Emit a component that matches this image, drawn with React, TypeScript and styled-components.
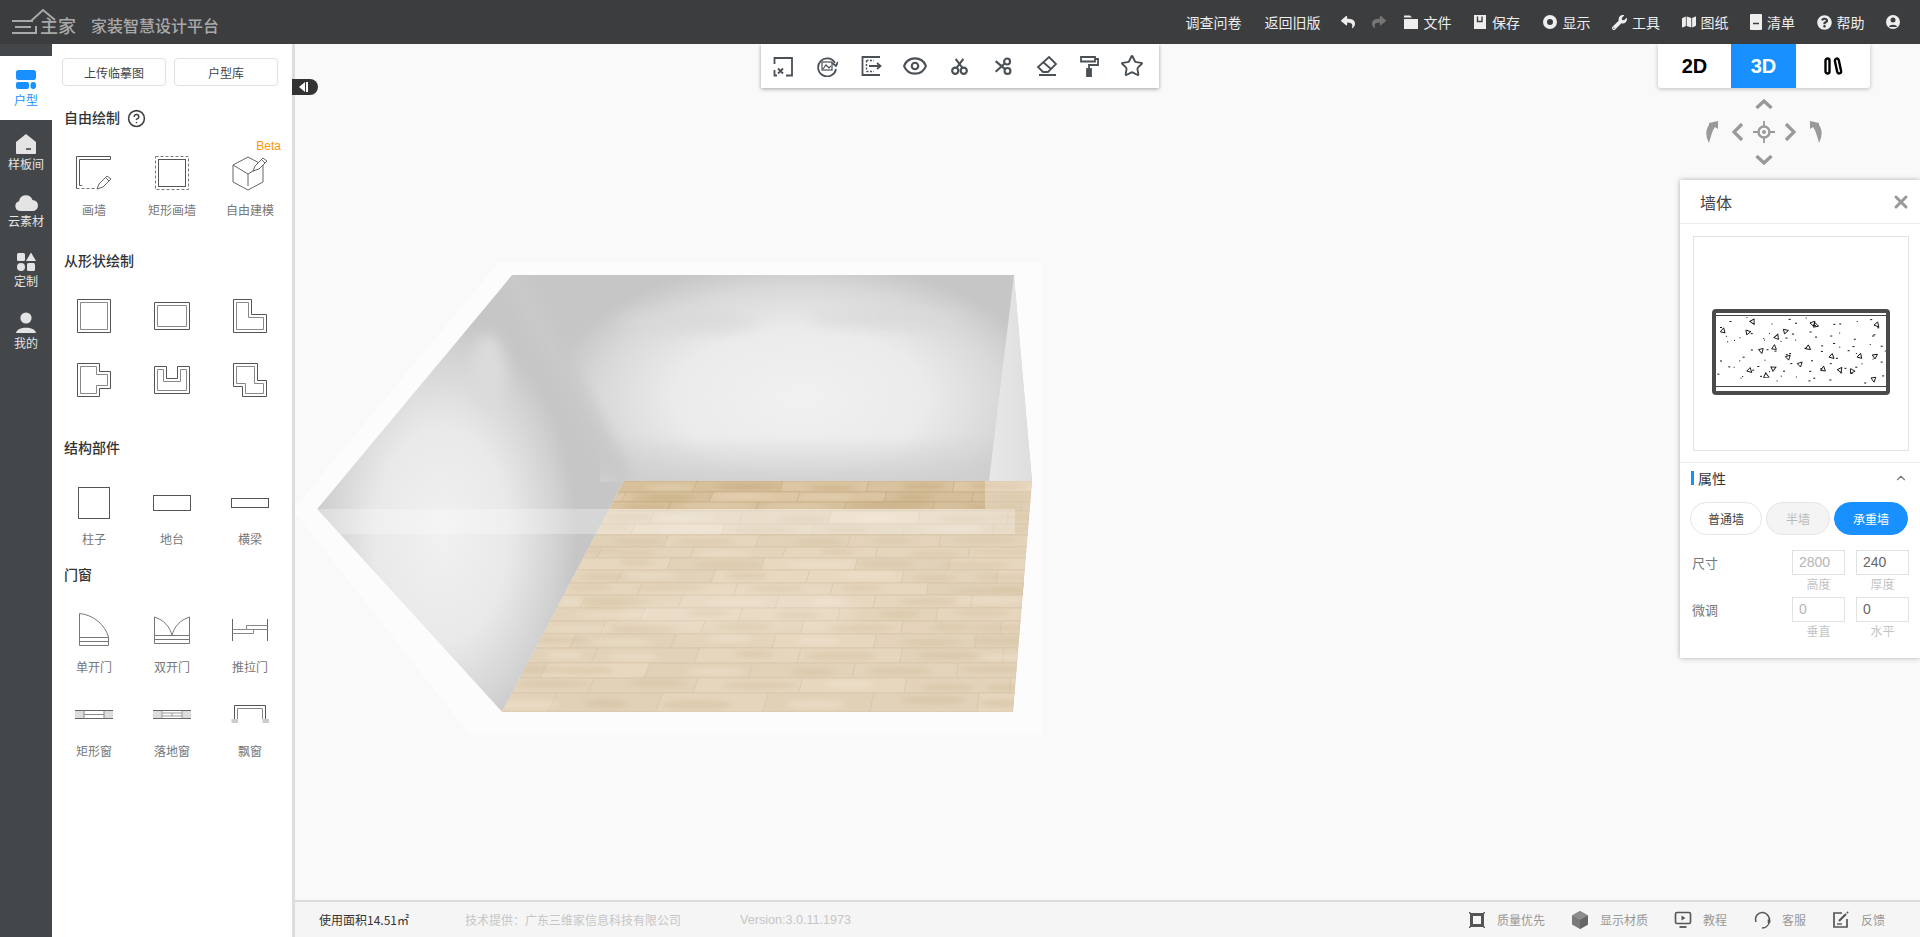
import React from 'react';
import styled, { createGlobalStyle } from 'styled-components';
import { FaReply, FaShare, FaWrench, FaMap, FaQuestionCircle } from 'react-icons/fa';
import { CircleHelp, Eye, Star, ChevronUp, X } from 'lucide-react';

const Global = createGlobalStyle`
  html, body { margin: 0; height: 100%; overflow: hidden; background: #f9f9f9; }
  body { font-family: "Noto Sans CJK SC", "Liberation Sans", sans-serif; font-size: 12px; }
  * { box-sizing: border-box; }
`;

const Page = styled.div`display:flex;flex-direction:column;width:1920px;height:937px;overflow:hidden;`;
const Header = styled.header`height:44px;flex:none;background:#3c3d3f;display:flex;align-items:center;justify-content:space-between;padding:0 20px 0 12px;color:#eee;position:relative;z-index:3;`;
const Brand = styled.div`display:flex;align-items:center;gap:13px;`;
const BrandText = styled.span`font-size:16px;font-weight:500;color:#a9a9a9;margin-top:5px;`;
const HeaderNav = styled.nav`display:flex;align-items:center;gap:21.5px;font-size:14px;`;
const TextLink = styled.span<{ $mr?: number }>`margin-right:${p => p.$mr ?? 0}px;`;
const NavItem = styled.span<{ $dim?: boolean; $mr?: number }>`display:inline-flex;align-items:center;gap:5px;margin-right:${p => p.$mr ?? 0}px;color:${p => (p.$dim ? '#757575' : '#eee')};svg{flex:none;display:block;}`;

const Body = styled.div`flex:1;display:flex;min-height:0;`;
const Rail = styled.aside`width:52px;flex:none;background:#43474a;padding-top:12px;`;
const RailItem = styled.div<{ $active?: boolean; $h: number; $top: number }>`
  height:${p => p.$h}px;padding-top:${p => p.$top}px;display:flex;flex-direction:column;align-items:center;
  background:${p => (p.$active ? '#fff' : 'transparent')};color:${p => (p.$active ? '#1890ff' : '#e4e4e4')};
  svg{display:block;flex:none;}
`;
const RailLabel = styled.span`font-size:12px;line-height:16px;margin-top:1px;`;

const Panel = styled.section`width:243px;flex:none;background:#fff;border-right:3px solid #ddd;padding:14px 0 0 3px;`;
const UploadRow = styled.div`display:flex;gap:8px;padding-left:7px;`;
const OutlineBtn = styled.div`width:104px;height:28px;border:1px solid #e0e0e0;border-radius:4px;font-size:12px;color:#444;display:flex;align-items:center;justify-content:center;`;
const Heading = styled.h3<{ $top: number }>`margin:${p => p.$top}px 0 0 9px;height:20px;padding-bottom:2px;line-height:18px;font-size:14px;font-weight:500;color:#333;display:flex;align-items:center;gap:7px;svg{margin-top:2px;}`;
const ToolGrid = styled.div<{ $top: number; $gap: number }>`margin-top:${p => p.$top}px;display:grid;grid-template-columns:repeat(3,78px);row-gap:${p => p.$gap}px;`;
const Tool = styled.div`position:relative;display:flex;flex-direction:column;align-items:center;svg{display:block;}`;
const ToolLabel = styled.span<{ $gap: number }>`margin-top:${p => p.$gap}px;font-size:12px;line-height:16px;color:#777;`;
const Beta = styled.span`position:absolute;top:-14px;right:8px;font-size:12px;line-height:16px;color:#ff9800;font-family:"Liberation Sans",sans-serif;`;

const Main = styled.main`flex:1;display:flex;flex-direction:column;min-width:0;`;
const Canvas = styled.div`flex:1;position:relative;background:#f9f9f9;`;
const RoomSvg = styled.svg`position:absolute;left:0;top:0;display:block;`;
const Collapse = styled.div`position:absolute;left:-3px;top:35px;width:26px;height:16px;background:#333;border-radius:0 8px 8px 0;display:flex;align-items:center;padding-left:7px;gap:1px;`;
const CollapseTri = styled.i`width:0;height:0;border-style:solid;border-width:5px 6px 5px 0;border-color:transparent #fff transparent transparent;`;
const CollapseBar = styled.i`width:2px;height:10px;background:#fff;`;
const Toolbar = styled.div`position:absolute;left:466px;top:0;height:44px;width:398px;background:#fff;box-shadow:0 1px 4px rgba(0,0,0,.35);display:flex;`;
const ToolBtn = styled.div`width:44px;height:44px;flex:none;display:flex;align-items:center;justify-content:center;color:#4a5056;&:nth-child(8){margin-left:-2px;}&:nth-child(9){margin-left:-1px;}`;
const ViewSwitch = styled.div`position:absolute;right:50px;top:0;height:44px;display:flex;background:#fff;border-radius:0 0 3px 3px;box-shadow:0 1px 4px rgba(0,0,0,.25);overflow:hidden;`;
const ViewBtn = styled.div<{ $w: number; $on?: boolean }>`width:${p => p.$w}px;display:flex;align-items:center;justify-content:center;font:700 20px "Liberation Sans",sans-serif;color:${p => (p.$on ? '#fff' : '#000')};background:${p => (p.$on ? '#1890ff' : 'transparent')};`;
const Orbit = styled.div`position:absolute;right:91px;top:51px;width:130px;display:grid;grid-template-columns:repeat(5,1fr);grid-template-rows:18px 38px 18px;place-items:center;color:#999;svg{display:block;}`;
const OrbitUp = styled.div`grid-column:3;grid-row:1;`;
const OrbitDown = styled.div`grid-column:3;grid-row:3;`;
const OrbitCell = styled.div<{ $c: number }>`grid-column:${p => p.$c};grid-row:2;`;

const Props = styled.aside`position:absolute;right:0;top:136px;width:240px;height:478px;background:#fff;box-shadow:0 0 5px rgba(0,0,0,.3);`;
const PropsHead = styled.div`height:44px;border-bottom:1px solid #ececec;display:flex;align-items:center;justify-content:space-between;padding:0 9px 0 20px;font-size:16px;color:#444;`;
const CloseX = styled.span`color:#999;display:flex;`;
const Preview = styled.div`margin:12px 11px 0 13px;height:215px;border:1px solid #e2e2e2;display:flex;align-items:center;justify-content:center;padding-top:17px;`;
const Divider = styled.div`margin-top:11px;height:1px;background:#ececec;`;
const SectionHead = styled.div`display:flex;align-items:center;justify-content:space-between;padding:0 12px 0 11px;margin-top:6px;height:18px;color:#777;`;
const SectionTitle = styled.span`border-left:3px solid #1890ff;padding-left:4px;line-height:14px;font-size:14px;color:#333;`;
const WallTypes = styled.div`display:flex;gap:4px;margin:15px 0 0 10px;`;
const WallType = styled.div<{ $w: number; $kind: 'plain' | 'off' | 'on' }>`
  width:${p => p.$w}px;height:33px;border-radius:17px;font-size:12px;display:flex;align-items:center;justify-content:center;
  border:1px solid ${p => (p.$kind === 'on' ? '#1890ff' : '#e5e5e5')};
  background:${p => (p.$kind === 'on' ? '#1890ff' : p.$kind === 'off' ? '#f4f4f4' : '#fff')};
  color:${p => (p.$kind === 'on' ? '#fff' : p.$kind === 'off' ? '#bbb' : '#444')};
`;
const Fields = styled.div`display:grid;grid-template-columns:100px 64px 53px;padding-left:12px;margin-top:15px;row-gap:4px;`;
const FieldName = styled.span`font-size:13px;color:#777;line-height:25px;`;
const Field = styled.div`display:flex;flex-direction:column;align-items:center;width:53px;`;
const FieldBox = styled.div<{ $dark?: boolean }>`width:53px;height:25px;border:1px solid #e2e2e2;padding-left:6px;font:14px/23px "Liberation Sans",sans-serif;color:${p => (p.$dark ? '#666' : '#b5b5b5')};`;
const FieldCap = styled.span`font-size:12px;line-height:18px;color:#c4c4c4;`;

const Footer = styled.footer`height:37px;flex:none;background:#f5f5f5;border-top:2px solid #ddd;display:flex;align-items:center;justify-content:space-between;padding:0 35px 0 24px;font-size:12px;`;
const FooterLeft = styled.div`display:flex;align-items:center;`;
const Area = styled.span`width:146px;color:#333;`;
const Muted = styled.span<{ $w?: number }>`color:#c6c6c6;${p => (p.$w ? `width:${p.$w}px;` : '')}`;
const Version = styled(Muted)`font:12.6px "Liberation Sans",sans-serif;`;
const FooterRight = styled.div`display:flex;gap:23px;`;
const FootItem = styled.div`display:flex;align-items:center;gap:8px;color:#999;`;
const FootIcon = styled.span`width:24px;height:24px;display:flex;align-items:center;justify-content:center;color:#555;`;

/* ---------- seeded data for the textures ---------- */
const rng = (seed: number) => () => {
  seed = (seed * 1664525 + 1013904223) >>> 0;
  return seed / 4294967296;
};

const rowYs = [481, 492, 502, 511, 524, 535, 547, 558, 570, 583, 595, 608, 621, 634, 648, 663, 678, 693, 712];
const leftX = (y: number) => 624 + ((y - 481) * (502 - 624)) / 231;
const rightX = (y: number) => 1032 + ((y - 481) * (1013 - 1032)) / 231;
const planks = (() => {
  const r = rng(73);
  const out: { pts: string; fill: string; gx: number; gy: number; grx: number; gry: number; dark: boolean }[] = [];
  const offs = [0.18, 0.02, 0.14, 0.11, 0.08, 0.17, 0.03, 0.2, 0.1, 0.16, 0.05, 0.19, 0.12, 0.07, 0.13, 0.04, 0.15, 0.09];
  for (let i = 0; i < rowYs.length - 1; i++) {
    const y0 = rowYs[i];
    const y1 = rowYs[i + 1];
    let u = offs[i] - 0.21;
    while (u < 1) {
      const a = Math.max(u, 0);
      const b = Math.min(u + 0.21, 1);
      const x = (t: number, y: number) => leftX(y) + t * (rightX(y) - leftX(y));
      const f = (t: number, y: number) => x(t, y).toFixed(1);
      const t = r();
      const c = [212 + t * 10, 189 + t * 10, 152 + t * 13].map(Math.round);
      out.push({
        pts: `${f(a, y0)},${y0} ${f(b, y0)},${y0} ${f(b, y1)},${y1} ${f(a, y1)},${y1}`,
        fill: `rgb(${c.join(',')})`,
        gx: x(a + (b - a) * (0.3 + r() * 0.4), (y0 + y1) / 2),
        gy: y0 + (y1 - y0) * (0.35 + r() * 0.3),
        grx: 18 + r() * 22,
        gry: (y1 - y0) * 0.22,
        dark: r() > 0.35,
      });
      u += 0.21;
    }
  }
  return out;
})();

const grit = (() => {
  const r = rng(29);
  const dots: { x: number; y: number; w: number }[] = [];
  for (let col = 0; col < 14; col++) {
    for (let row = 0; row < 6; row++) {
      dots.push({ x: 5 + (col + r()) * 12, y: 8 + (row + r()) * 11, w: r() > 0.45 ? 2 : 1 });
    }
  }
  const tris: { x: number; y: number; a: number }[] = [];
  for (let col = 0; col < 10; col++) {
    for (let row = 0; row < 3; row++) {
      if (r() > 0.85) continue;
      tris.push({ x: 8 + (col + r()) * 16, y: 13 + (row + r() * 0.9) * 20, a: r() * 180 });
    }
  }
  return { dots, tris };
})();

/* ---------- drawings ---------- */
type S = { s: number; h?: number; children: React.ReactNode; vb?: string };
const Svg = ({ s, h, children, vb }: S) => (
  <svg width={s} height={h ?? s} viewBox={vb ?? `0 0 ${s} ${h ?? s}`} fill="none">{children}</svg>
);

const Logo = () => (
  <svg width="66" height="36" viewBox="0 0 66 36" fill="none">
    <g stroke="#a9a9a9" strokeWidth="2">
      <path d="M0 17H21M3 23H19M0 29H24V22" />
      <path d="M19 17 31 6 43 16" />
    </g>
    <text x="28" y="29" fontSize="18" fontWeight="500" fill="#a9a9a9" fontFamily='"Noto Sans CJK SC",sans-serif'>主家</text>
  </svg>
);

const Pencil = ({ x, y }: { x: number; y: number }) => (
  <path transform={`translate(${x} ${y})`} d="M0 13 2 8 10 0 14 3 6 11 0 13ZM8.5 1.5 12 5" stroke="#666" strokeWidth="1" fill="#fff" />
);
const st = { stroke: '#555', strokeWidth: 1 };
const st2 = { stroke: '#888', strokeWidth: 1 };
const I = ({ children }: { children: React.ReactNode }) => <Svg s={40}>{children}</Svg>;
const Double = ({ a, b }: { a: string; b: string }) => (
  <I><path d={a} {...st} /><path d={b} {...st2} /></I>
);

const icons = {
  wall: <I><path d="M2.5 36.5V4.5H36.5V7.5H5.5V33.5" {...st} /><path d="M2.5 36.5H22M5.5 33.5H10" stroke="#777" strokeDasharray="3 2" /><Pencil x={23} y={24} /></I>,
  rect: <I><rect x="3.5" y="4.5" width="33" height="33" stroke="#777" strokeDasharray="3 2" /><rect x="6.5" y="7.5" width="27" height="27" {...st} /></I>,
  model: <I><path d="M18 5 33 13V30L18 38 3 30V13ZM3 13 18 22 30 15M18 22V34" stroke="#666" /><Pencil x={23} y={6} /></I>,
  square: <Double a="M3.5 3.5H36.5V36.5H3.5Z" b="M6.5 6.5H33.5V33.5H6.5Z" />,
  wide: <Double a="M2.5 6.5H37.5V33.5H2.5Z" b="M5.5 9.5H34.5V30.5H5.5Z" />,
  ell: <Double a="M3.5 3.5H21.5V18.5H36.5V36.5H3.5Z" b="M6.5 6.5H18.5V21.5H33.5V33.5H6.5Z" />,
  tee: <Double a="M3.5 3.5H25.5V11.5H36.5V28.5H25.5V36.5H3.5Z" b="M6.5 6.5H22.5V14.5H33.5V25.5H22.5V33.5H6.5Z" />,
  you: <Double a="M2.5 6.5H14.5V18.5H25.5V6.5H37.5V33.5H2.5Z" b="M5.5 9.5H11.5V21.5H28.5V9.5H34.5V30.5H5.5Z" />,
  zed: <Double a="M3.5 3.5H27.5V20.5H36.5V36.5H12.5V26.5H3.5Z" b="M6.5 6.5H24.5V23.5H33.5V33.5H15.5V23.5H6.5Z" />,
  pillar: <I><rect x="4.5" y="4.5" width="31" height="31" {...st} /></I>,
  plinth: <I><rect x="1.5" y="12.5" width="37" height="15" {...st} /></I>,
  beam: <I><rect x="1.5" y="15.5" width="37" height="9" {...st} /></I>,
  door: <I><path d="M5.5 35.5V3.5C20 5 31 15 34.5 27V35.5ZM5.5 27.5H34.5M5.5 31.5H34.5" stroke="#777" /></I>,
  door2: <I><path d="M2.5 33.5V7C12 10 18 17 20 25.5 22 17 28 10 37.5 7V33.5ZM2.5 25.5H37.5M2.5 29.5H37.5" stroke="#777" /></I>,
  slide: <I><path d="M2.5 9V31M37.5 9V31" stroke="#666" /><path d="M16.5 19.5V15.5H37.5M2.5 19.5H37.5M2.5 23.5H23.5V19.5" stroke="#888" /></I>,
  win: <I><rect x="1" y="16.5" width="9" height="8" fill="#ddd" /><rect x="30" y="16.5" width="9" height="8" fill="#ddd" /><path d="M1 16.5H39M1 24.5H39" stroke="#666" /><path d="M10 20.5H30M10 16.5V24.5M30 16.5V24.5" stroke="#888" /></I>,
  win2: <I><rect x="1" y="16.5" width="9" height="8" fill="#ddd" /><rect x="30" y="16.5" width="9" height="8" fill="#ddd" /><path d="M1 16.5H39M1 24.5H39" stroke="#666" /><path d="M10 19H30M10 22H30M10 16.5V24.5M30 16.5V24.5M20 19V22" stroke="#999" /></I>,
  bay: <I><rect x="1.5" y="25" width="6.5" height="4" fill="#ccc" /><rect x="32.5" y="25" width="6.5" height="4" fill="#ccc" /><path d="M4.5 25V11.5H35.5V25" stroke="#555" /><path d="M7.5 25V14.5H32.5V25" stroke="#888" /></I>,
};

const tb = { stroke: 'currentColor', strokeWidth: 1.8, fill: 'none' as const };
const toolIcons = [
  <Svg s={22}><path d="M2.5 9V3H20V20.5H14M2.5 15V20.5H5" {...tb} /><path d="M6 13.5 11 18.5M11 13.5 6 18.5" {...tb} /></Svg>,
  <Svg s={22}><path d="M19 8A9 9 0 1 0 20 14" {...tb} /><path d="M16 8 20 11 22 7" {...tb} /><rect x="6" y="7" width="10" height="8" {...tb} strokeWidth={1.2} /><path d="M7 14 10 10 13 13 15 11" {...tb} strokeWidth={1.2} /></Svg>,
  <Svg s={22}><path d="M20 2H2.5V20H20" {...tb} /><path d="M6.5 5.5V16.5M6.5 5.5H14M6.5 16.5H14" {...tb} strokeWidth={1.4} strokeDasharray="2 1.5" /><path d="M9 11H20M17 8 20.5 11 17 14" {...tb} /></Svg>,
  <Eye size={26} strokeWidth={2} />,
  <Svg s={17} vb="0 0 22 22"><path d="M6 1 15 13M16 1 7 13" {...tb} strokeWidth={2.6} /><circle cx="5.5" cy="16.5" r="4" {...tb} strokeWidth={2.8} /><circle cx="16.5" cy="16.5" r="4" {...tb} strokeWidth={2.8} /></Svg>,
  <Svg s={18} vb="0 0 22 22"><path d="M2 5 16 17M2 18 15 6" {...tb} strokeWidth={2.6} /><circle cx="16" cy="5.5" r="3.6" fill="#fff" stroke="currentColor" strokeWidth="2.6" /><circle cx="16.5" cy="17" r="3.6" fill="#fff" stroke="currentColor" strokeWidth="2.6" /></Svg>,
  <Svg s={22}><path d="M13 2 20 9 12 17H7L2 12ZM7 7 15 14M3 20H20" {...tb} /></Svg>,
  <Svg s={22}><path d="M3 2H17V6.5H3ZM17 4H20V10H11V14" {...tb} /><rect x="9" y="14" width="4" height="8" {...tb} fill="currentColor" /></Svg>,
  <Star size={24} strokeWidth={1.9} />,
];

const Room = () => (
  <RoomSvg width="800" height="856" viewBox="295 44 800 856">
    <defs>
      <filter id="b3" x="-50%" y="-50%" width="200%" height="200%"><feGaussianBlur stdDeviation="12" /></filter>
      <filter id="b2" x="-50%" y="-50%" width="200%" height="200%"><feGaussianBlur stdDeviation="7" /></filter>
      <filter id="b0" x="-20%" y="-20%" width="140%" height="140%"><feGaussianBlur stdDeviation="2.5" /></filter>
      <clipPath id="walls"><path d="M512 275H1014L1032 481H624L502 712 317 509Z" /></clipPath>
      <clipPath id="floor"><path d="M624 481H1032L1013 712H502Z" /></clipPath>
      <radialGradient id="backR" gradientUnits="userSpaceOnUse" cx="0" cy="0" r="1" gradientTransform="translate(800 398) scale(250 138)">
        <stop offset="0" stopColor="#f1f1f1" />
        <stop offset=".5" stopColor="#ebebeb" />
        <stop offset=".8" stopColor="#d9d9d9" />
        <stop offset="1" stopColor="#c6c6c6" />
      </radialGradient>
      <radialGradient id="leftR" gradientUnits="userSpaceOnUse" cx="0" cy="0" r="1" gradientTransform="translate(442 535) scale(135 215)">
        <stop offset="0" stopColor="#f1f1f1" />
        <stop offset=".5" stopColor="#e9e9e9" />
        <stop offset=".85" stopColor="#d2d2d2" />
        <stop offset="1" stopColor="#c6c6c6" />
      </radialGradient>
      <linearGradient id="skirt" x1="0" y1="0" x2="0" y2="1"><stop offset="0" stopColor="#cfcfcf" stopOpacity="0" /><stop offset="1" stopColor="#cfcfcf" stopOpacity=".9" /></linearGradient>
      <linearGradient id="sideG" x1="0" y1="0" x2="1" y2="0"><stop offset="0" stopColor="#e8e8e8" /><stop offset="1" stopColor="#dedede" /></linearGradient>
    </defs>
    <path d="M499 262H1041V735H470L293 510Z" fill="#fcfcfc" />
    <g clipPath="url(#walls)">
      <path d="M512 275H1014L1032 481H624Z" fill="url(#backR)" />
      <path d="M512 275 317 509 502 712 624 481Z" fill="url(#leftR)" />
      <rect x="600" y="435" width="440" height="47" fill="url(#skirt)" />
      <ellipse cx="690" cy="322" rx="70" ry="10" fill="#d9d9d9" opacity=".8" filter="url(#b2)" />
      <ellipse cx="890" cy="318" rx="80" ry="9" fill="#d9d9d9" opacity=".8" filter="url(#b2)" />
      <ellipse cx="488" cy="372" rx="17" ry="38" fill="#dbdbdb" filter="url(#b2)" />
      <path d="M512 275 624 481" stroke="#c9c9c9" strokeWidth="20" filter="url(#b2)" />
    </g>
    <g clipPath="url(#floor)">
      {planks.map((p, i) => <polygon key={i} points={p.pts} fill={p.fill} stroke="#c3aa80" strokeWidth=".6" />)}
      <g filter="url(#b0)">
        {planks.map((p, i) => (
          <ellipse key={i} cx={p.gx} cy={p.gy} rx={p.grx} ry={p.gry} fill={p.dark ? '#b89a68' : '#f0e2c8'} opacity=".4" />
        ))}
      </g>
      <path d="M560 509H1040V720H480ZM985 481H1040V509H985Z" fill="#fff" opacity=".3" />
      <ellipse cx="740" cy="612" rx="120" ry="22" fill="#fff" opacity=".14" filter="url(#b2)" />
    </g>
    <path d="M1014 275 1032 481H989Z" fill="url(#sideG)" />
    <path d="M317 509H1015V534H340Z" fill="#fff" opacity=".28" />
  </RoomSvg>
);

const WallSample = () => (
  <svg width="178" height="86" viewBox="0 0 178 86" fill="none">
    <rect x="2" y="2" width="174" height="82" rx="2" fill="#fff" stroke="#4a4a4a" strokeWidth="4" />
    <path d="M3 6.5H175M3 77.5H175" stroke="#444" />
    {grit.dots.map((d, i) => <rect key={i} x={d.x} y={d.y} width={d.w} height="1" fill="#111" />)}
    {grit.tris.map((t, i) => (
      <path key={i} transform={`translate(${t.x.toFixed(1)} ${t.y.toFixed(1)}) rotate(${t.a.toFixed(0)})`} d="M0-2.6 2.4 2H-2.4Z" stroke="#111" strokeWidth=".9" />
    ))}
  </svg>
);

const headerItems: [React.ReactNode, string][] = [
  [<Svg s={16}><path d="M1 1.5H7L9 3.5H1ZM1 5H15V15H1Z" fill="#eee" /></Svg>, '文件'],
  [<Svg s={14}><path d="M1 0H13V14H1Z" fill="#eee" /><path d="M9 1.5V6.5H4.5V1.5" stroke="#3c3d3f" strokeWidth="1.4" /></Svg>, '保存'],
  [<Svg s={16}><circle cx="8" cy="8" r="5" stroke="#eee" strokeWidth="4" /></Svg>, '显示'],
  [<FaWrench size={15} color="#eee" />, '工具'],
  [<FaMap size={14} color="#eee" />, '图纸'],
  [<Svg s={12} h={16}><path d="M1 0H11A1 1 0 0 1 12 1V15A1 1 0 0 1 11 16H1A1 1 0 0 1 0 15V1A1 1 0 0 1 1 0Z" fill="#eee" /><path d="M3 9.5H9" stroke="#3c3d3f" strokeWidth="1.5" /></Svg>, '清单'],
  [<FaQuestionCircle size={15} color="#eee" />, '帮助'],
];

const Grid = ({ items, top, gap, label }: { items: [keyof typeof icons, string?][]; top: number; gap: number; label?: number }) => (
  <ToolGrid $top={top} $gap={gap}>
    {items.map(([k, t], i) => (
      <Tool key={i}>
        {icons[k]}
        {t && <ToolLabel $gap={label ?? 9}>{t}</ToolLabel>}
      </Tool>
    ))}
  </ToolGrid>
);

export default function App() {
  return (
    <Page>
      <Global />
      <Header>
        <Brand>
          <Logo />
          <BrandText>家装智慧设计平台</BrandText>
        </Brand>
        <HeaderNav>
          <TextLink $mr={1.5}>调查问卷</TextLink>
          <TextLink $mr={-1.5}>返回旧版</TextLink>
          <NavItem $mr={-4.5}><FaReply size={14} /></NavItem>
          <NavItem $dim $mr={-4.5}><FaShare size={14} /></NavItem>
          {headerItems.map(([ic, t]) => <NavItem key={t}>{ic}{t}</NavItem>)}
          <NavItem>
            <Svg s={14}><circle cx="7" cy="7" r="7" fill="#eee" /><circle cx="7" cy="5" r="2.5" fill="#3c3d3f" /><path d="M3 12C3.5 9 10.5 9 11 12Z" fill="#3c3d3f" /></Svg>
          </NavItem>
        </HeaderNav>
      </Header>
      <Body>
        <Rail>
          <RailItem $active $h={64} $top={13}>
            <Svg s={22}><rect x="1" y="1" width="20" height="10" rx="2.5" fill="currentColor" /><rect x="1" y="13" width="13" height="7" rx="2" fill="currentColor" /><rect x="15.5" y="13" width="5.5" height="7" rx="2.7" fill="currentColor" /></Svg>
            <RailLabel>户型</RailLabel>
          </RailItem>
          <RailItem $h={58} $top={13}>
            <Svg s={22}><path d="M1 9 11 1 21 9V20A1 1 0 0 1 20 21H2A1 1 0 0 1 1 20Z" fill="currentColor" /><path d="M11 16H16" stroke="#43474a" strokeWidth="1.6" /></Svg>
            <RailLabel>样板间</RailLabel>
          </RailItem>
          <RailItem $h={60} $top={14}>
            <Svg s={24} h={20}><path d="M6 19A5 5 0 0 1 5 9.2 7 7 0 0 1 18.5 8 5.5 5.5 0 0 1 18.5 19Z" fill="currentColor" /></Svg>
            <RailLabel>云素材</RailLabel>
          </RailItem>
          <RailItem $h={60} $top={14}>
            <Svg s={20}><rect x="1" y="1" width="8" height="8" rx="1.5" fill="currentColor" /><path d="M15 .5 20 9H10Z" fill="currentColor" /><circle cx="5" cy="15" r="4" fill="currentColor" /><rect x="11" y="11" width="8" height="8" rx="1.5" fill="currentColor" /></Svg>
            <RailLabel>定制</RailLabel>
          </RailItem>
          <RailItem $h={60} $top={14}>
            <Svg s={22}><circle cx="11" cy="6" r="5.6" fill="currentColor" /><path d="M1 21C2 14 20 14 21 21Z" fill="currentColor" /></Svg>
            <RailLabel>我的</RailLabel>
          </RailItem>
        </Rail>
        <Panel>
          <UploadRow>
            <OutlineBtn>上传临摹图</OutlineBtn>
            <OutlineBtn>户型库</OutlineBtn>
          </UploadRow>
          <Heading $top={22}>自由绘制 <CircleHelp size={19} color="#444" strokeWidth={2} /></Heading>
          <ToolGrid $top={24} $gap={0}>
            <Tool>{icons.wall}<ToolLabel $gap={10}>画墙</ToolLabel></Tool>
            <Tool>{icons.rect}<ToolLabel $gap={10}>矩形画墙</ToolLabel></Tool>
            <Tool><Beta>Beta</Beta>{icons.model}<ToolLabel $gap={10}>自由建模</ToolLabel></Tool>
          </ToolGrid>
          <Heading $top={33}>从形状绘制</Heading>
          <Grid top={25} gap={24} items={[['square'], ['wide'], ['ell'], ['tee'], ['you'], ['zed']]} />
          <Heading $top={38}>结构部件</Heading>
          <Grid top={25} gap={0} label={8} items={[['pillar', '柱子'], ['plinth', '地台'], ['beam', '横梁']]} />
          <Heading $top={18}>门窗</Heading>
          <Grid top={25} gap={19} items={[['door', '单开门'], ['door2', '双开门'], ['slide', '推拉门'], ['win', '矩形窗'], ['win2', '落地窗'], ['bay', '飘窗']]} />
        </Panel>
        <Main>
          <Canvas>
            <Room />
            <Collapse><CollapseTri /><CollapseBar /></Collapse>
            <Toolbar>{toolIcons.map((ic, i) => <ToolBtn key={i}>{ic}</ToolBtn>)}</Toolbar>
            <ViewSwitch>
              <ViewBtn $w={73}>2D</ViewBtn>
              <ViewBtn $w={65} $on>3D</ViewBtn>
              <ViewBtn $w={74}>
                <Svg s={22}><rect x="3.5" y="3.5" width="4" height="15" rx="2" stroke="#000" strokeWidth="2.4" /><rect x="14" y="3.5" width="4" height="15" rx="2" stroke="#000" strokeWidth="2.4" transform="rotate(-12 16 11)" /></Svg>
              </ViewBtn>
            </ViewSwitch>
            <Orbit>
              <OrbitUp><Svg s={18}><path d="M1.5 13 9 6 16.5 13" stroke="currentColor" strokeWidth="3.4" /></Svg></OrbitUp>
              <OrbitCell $c={1}><Svg s={14} h={22}><path d="M4 22C0 14 1 8 4 4V2L13 0V8L10 6C7 10 6 15 4 22Z" fill="currentColor" /></Svg></OrbitCell>
              <OrbitCell $c={2}><Svg s={18}><path d="M13 1 5 9 13 17" stroke="currentColor" strokeWidth="3.2" /></Svg></OrbitCell>
              <OrbitCell $c={3}><Svg s={22}><circle cx="11" cy="11" r="5.5" stroke="currentColor" strokeWidth="2.4" /><circle cx="11" cy="11" r="2" fill="currentColor" /><path d="M11 0V6M11 16V22M0 11H6M16 11H22" stroke="currentColor" strokeWidth="1.8" /></Svg></OrbitCell>
              <OrbitCell $c={4}><Svg s={18}><path d="M5 1 13 9 5 17" stroke="currentColor" strokeWidth="3.2" /></Svg></OrbitCell>
              <OrbitCell $c={5}><Svg s={14} h={22}><path d="M10 22C14 14 13 8 10 4V2L1 0V8L4 6C7 10 8 15 10 22Z" fill="currentColor" /></Svg></OrbitCell>
              <OrbitDown><Svg s={18}><path d="M1.5 5 9 12 16.5 5" stroke="currentColor" strokeWidth="3.4" /></Svg></OrbitDown>
            </Orbit>
            <Props>
              <PropsHead>墙体<CloseX><X size={20} strokeWidth={3.6} /></CloseX></PropsHead>
              <Preview><WallSample /></Preview>
              <Divider />
              <SectionHead>
                <SectionTitle>属性</SectionTitle>
                <ChevronUp size={14} />
              </SectionHead>
              <WallTypes>
                <WallType $w={72} $kind="plain">普通墙</WallType>
                <WallType $w={64} $kind="off">半墙</WallType>
                <WallType $w={74} $kind="on">承重墙</WallType>
              </WallTypes>
              <Fields>
                <FieldName>尺寸</FieldName>
                <Field><FieldBox>2800</FieldBox><FieldCap>高度</FieldCap></Field>
                <Field><FieldBox $dark>240</FieldBox><FieldCap>厚度</FieldCap></Field>
                <FieldName>微调</FieldName>
                <Field><FieldBox>0</FieldBox><FieldCap>垂直</FieldCap></Field>
                <Field><FieldBox $dark>0</FieldBox><FieldCap>水平</FieldCap></Field>
              </Fields>
            </Props>
          </Canvas>
          <Footer>
            <FooterLeft>
              <Area>使用面积14.51㎡</Area>
              <Muted $w={275}>技术提供：广东三维家信息科技有限公司</Muted>
              <Version>Version:3.0.11.1973</Version>
            </FooterLeft>
            <FooterRight>
              <FootItem><FootIcon><Svg s={16}><rect x="2.5" y="2.5" width="11" height="11" stroke="currentColor" strokeWidth="3" /><path d="M0 0 3 3M16 0 13 3M0 16 3 13M16 16 13 13" stroke="currentColor" strokeWidth="1.4" /></Svg></FootIcon>质量优先</FootItem>
              <FootItem><FootIcon><Svg s={18}><path d="M9 0 17 4.5V13.5L9 18 1 13.5V4.5Z" fill="#7a7a7a" /><path d="M1 4.5 9 9 17 4.5 9 0Z" fill="#8d8d8d" /><path d="M9 9V18L17 13.5V4.5Z" fill="#666" /></Svg></FootIcon>显示材质</FootItem>
              <FootItem><FootIcon><Svg s={18}><rect x="1.5" y="1.5" width="15" height="11" rx="1.5" stroke="currentColor" strokeWidth="1.6" /><path d="M7.5 4.5 11.5 7 7.5 9.5Z" fill="currentColor" /><path d="M5.5 16H12.5" stroke="currentColor" strokeWidth="1.8" /></Svg></FootIcon>教程</FootItem>
              <FootItem><FootIcon><Svg s={18}><path d="M3 11C1 5 6 1 10 1.5 14 2 17 6 16.5 10 16 14 13 17 9 17" stroke="currentColor" strokeWidth="1.5" /><path d="M16 8.5V12" stroke="currentColor" strokeWidth="2.6" /></Svg></FootIcon>客服</FootItem>
              <FootItem><FootIcon><Svg s={18}><path d="M10 2H2V16H15V8" stroke="currentColor" strokeWidth="1.7" /><path d="M7 10 14 3M15 1 16 2" stroke="currentColor" strokeWidth="2" /><path d="M5 13H10" stroke="currentColor" strokeWidth="1.4" /></Svg></FootIcon>反馈</FootItem>
            </FooterRight>
          </Footer>
        </Main>
      </Body>
    </Page>
  );
}
